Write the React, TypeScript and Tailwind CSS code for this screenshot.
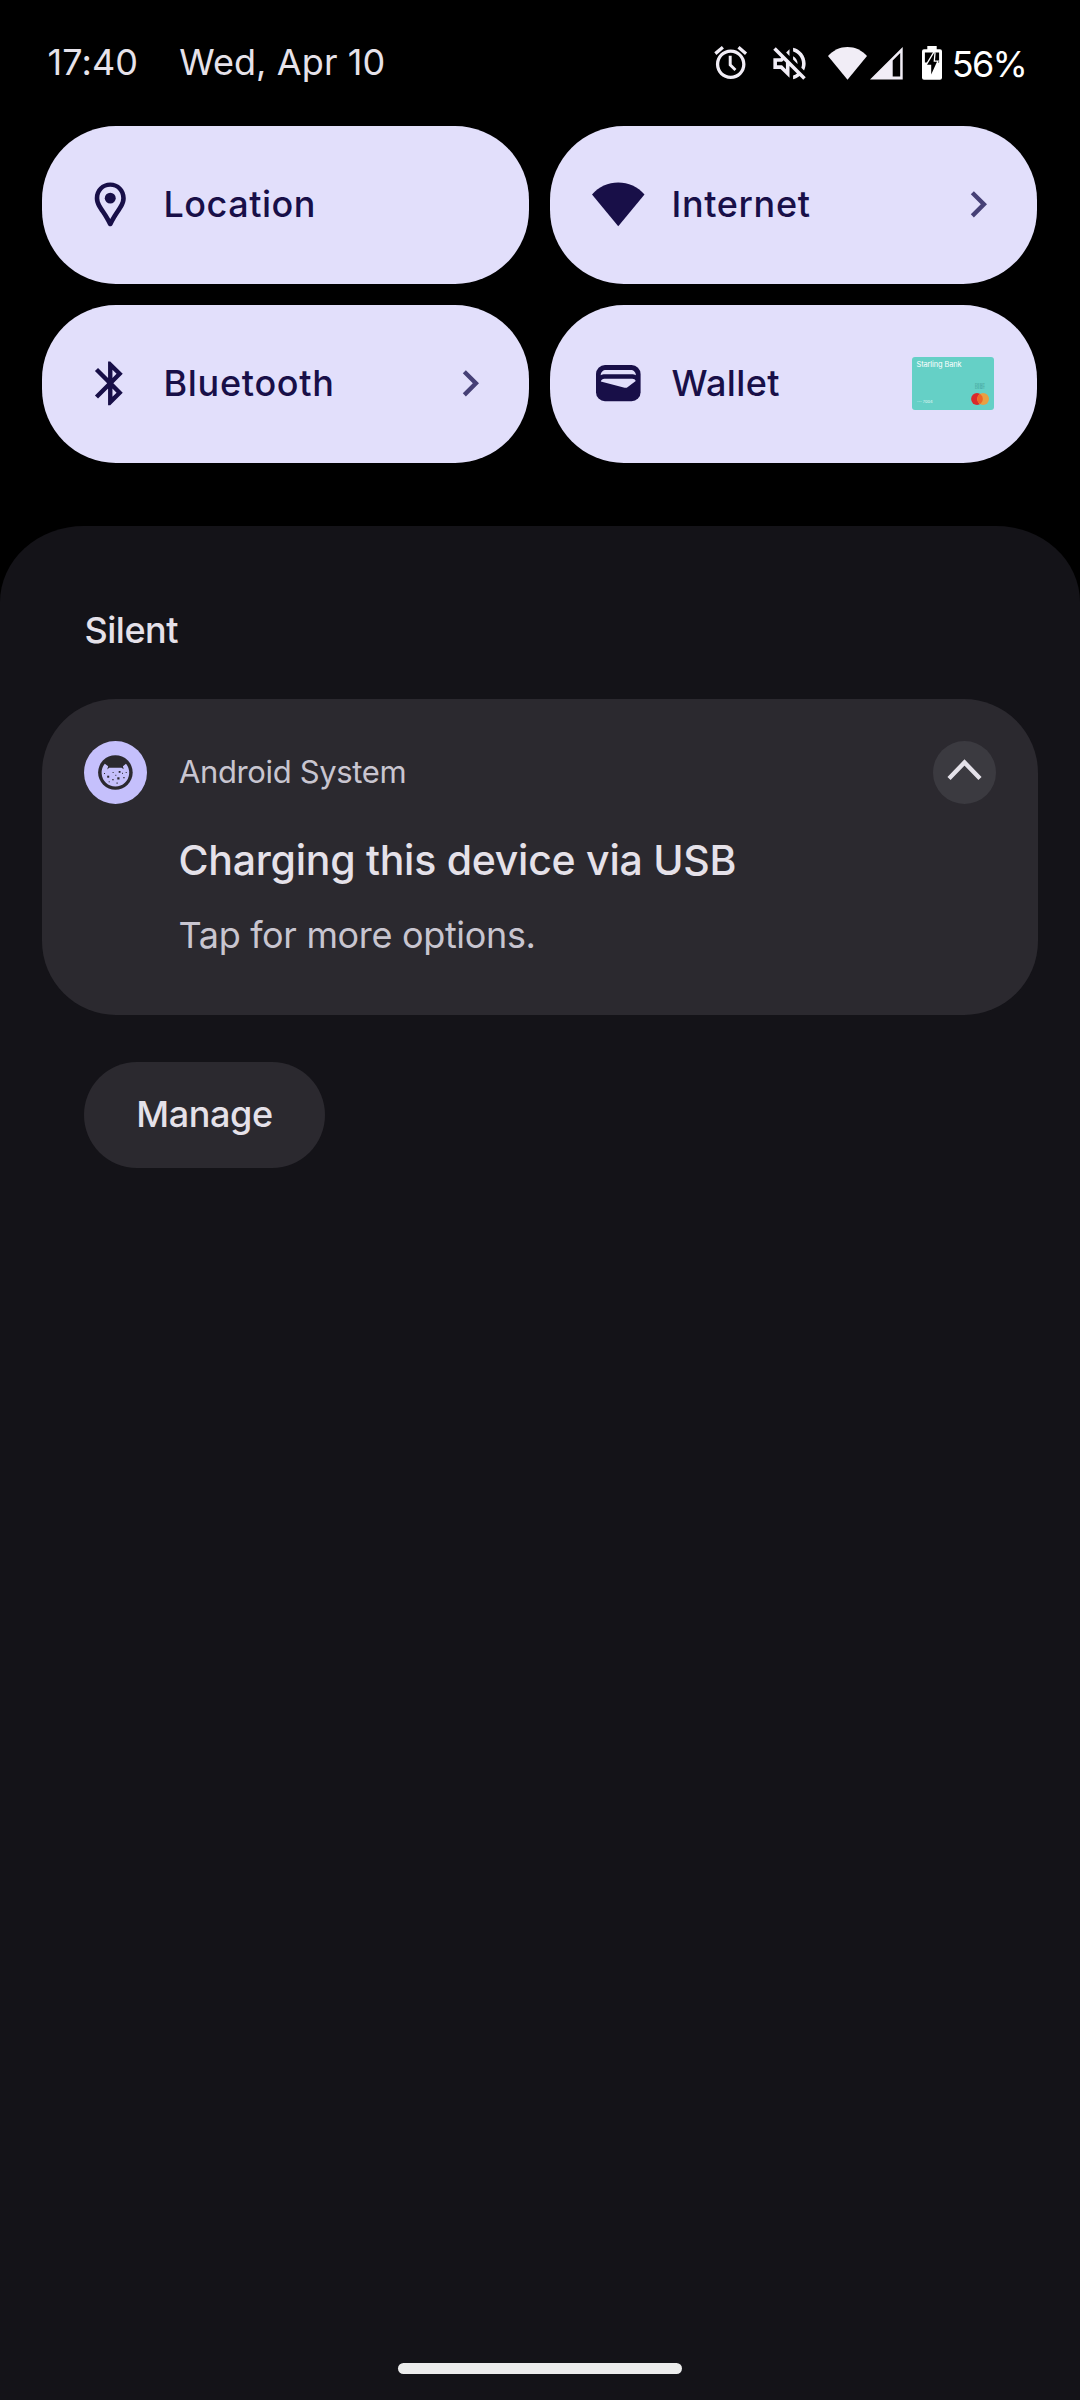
import type { ReactNode } from "react";

function AlarmIcon() {
  return (
    <svg viewBox="0 0 24 24" className="size-[39.4px]" fill="currentColor">
      <path d="M22 5.72l-4.6-3.86-1.29 1.53 4.6 3.86L22 5.72zM7.88 3.39L6.6 1.86 2 5.71l1.29 1.53 4.59-3.85zM12.6 7.8h-1.8v5.9l3.5 3.4 1.2-1.3-2.9-2.8V7.8zM12 4c-4.97 0-9 4.03-9 9s4.02 9 9 9a9 9 0 000-18zm0 16c-3.87 0-7-3.13-7-7s3.13-7 7-7 7 3.13 7 7-3.13 7-7 7z" />
    </svg>
  );
}

function MutedIcon() {
  return (
    <svg viewBox="0 0 24 24" className="size-[43px]" fill="currentColor">
      <path d="M4.34 2.93L2.93 4.34 7.29 8.7 7 9H3v6h4l5 5v-6.59l4.18 4.18c-.65.49-1.38.88-2.18 1.11v2.06c1.34-.3 2.57-.92 3.61-1.75l2.05 2.05 1.41-1.41L4.34 2.93zM10 15.17L7.83 13H5v-2h2.83l.88-.88L10 11.41v3.76zM19 12c0 .82-.15 1.61-.41 2.34l1.53 1.53c.56-1.17.88-2.48.88-3.87 0-4.28-2.99-7.86-7-8.77v2.06c2.89.86 5 3.54 5 6.71zm-7-8l-1.88 1.88L12 7.76V4zm4.5 8c0-1.77-1.02-3.29-2.5-4.03v1.79l2.48 2.48c.01-.08.02-.16.02-.24z" />
    </svg>
  );
}

function StatusWifiIcon() {
  return (
    <svg viewBox="0 0 39 33" className="h-[33px] w-[39px]" fill="currentColor">
      <path d="M0 9C5 3.3 12 0 19.5 0S34 3.3 39 9L19.5 32.7z" />
    </svg>
  );
}

function SignalIcon() {
  return (
    <svg viewBox="0 0 33 33" className="size-[33px]" fill="currentColor" fillRule="evenodd">
      <path d="M0 32.5H32.7V0zM22.7 13.5L30.2 6V29.5H22.7z" />
    </svg>
  );
}

function BatteryIcon() {
  return (
    <svg viewBox="0 0 20 34" className="h-[34px] w-[20px]">
      <rect x="5.3" y="0" width="9.4" height="6" fill="#fff" />
      <rect x="0" y="3.2" width="20" height="30.5" rx="2" fill="#fff" />
      <rect x="2.9" y="6.5" width="14.2" height="10" fill="#000" />
      <path d="M12.4 6.5L5 18.8h4.2v9.7l5.8-12.7h-3.4z" fill="#000" stroke="#fff" strokeWidth="2.6" />
      <path d="M12.4 6.5L5 18.8h4.2v9.7l5.8-12.7h-3.4z" fill="#000" />
    </svg>
  );
}

function LocationIcon() {
  return (
    <svg viewBox="0 0 24 24" className="size-[52.5px]" fill="currentColor" fillRule="evenodd">
      <path d="M12 2C8.1 2 4.9 5 4.9 9.2c0 2.5 1.4 4.5 3 6.9 1.4 2 2.3 3.700 3.100 5.400.350.750 1.650.750 2 0 .800-1.700 1.700-3.400 3.100-5.400 1.600-2.400 3-4.400 3-6.900C19.100 5 15.900 2 12 2zm0 2c2.900 0 5 2.200 5 5.200 0 1.900-1.100 3.400-2.500 5.500-1 1.400-1.800 2.700-2.500 4-.700-1.300-1.500-2.600-2.500-4C8.100 12.600 7 11.100 7 9.200 7 6.200 9.100 4 12 4z" />
      <circle cx="12" cy="9.2" r="2.5" />
    </svg>
  );
}

function WifiIcon() {
  return (
    <svg viewBox="0 0 24 24" className="size-[52.5px]" fill="currentColor">
      <path d="M12 22.100L0 7.500C3.100 3.800 7.400 2 12 2s8.900 1.800 12 5.500z" />
    </svg>
  );
}

function BluetoothIcon() {
  return (
    <svg viewBox="0 0 24 24" className="size-[52.5px]" fill="currentColor" fillRule="evenodd">
      <path d="M17.71 7.71L12 2h-1v7.59L6.41 5 5 6.41 10.59 12 5 17.59 6.41 19 11 14.41V22h1l5.71-5.71-4.3-4.29 4.3-4.29zM13 5.83l1.88 1.88L13 9.59V5.83zm1.88 10.46L13 18.17v-3.76l1.88 1.88z" />
    </svg>
  );
}

function WalletIcon() {
  return (
    <svg viewBox="-4 -8 52.5 52.5" className="size-[52.5px]">
      <rect x="0" y="0" width="44.6" height="36.2" rx="9" fill="#180f48" />
      <path d="M4.7 10.3C4.9 7 7 5 10 5H34.6C37.6 5 39.7 7 39.9 10.3C38.6 9.4 37.3 9.2 36 9.2H8.6C7.3 9.2 6 9.4 4.7 10.3z" fill="#e2dffb" />
      <path d="M4.8 16.6C5.4 14.8 6.6 13.8 8.4 13.8H36.2C38 13.8 39.2 14.6 39.7 16L31.8 22C30.8 22.8 29.8 23 28.6 22.7z" fill="#e2dffb" />
    </svg>
  );
}

function ChevronRight() {
  return (
    <svg viewBox="0 0 24 24" className="size-[52.5px] text-[#464076]" fill="currentColor">
      <path d="M8.59 16.59L13.17 12 8.59 7.41 10 6l6 6-6 6z" />
    </svg>
  );
}

function SystemIcon() {
  return (
    <svg viewBox="0 0 63 63" className="size-[63px]">
      <circle cx="31.5" cy="31.5" r="31.5" fill="#c5c0fc" />
      <circle cx="31.4" cy="31.5" r="17.3" fill="#2b292f" />
      <path
        d="M20.8 22.8A13.8 13.8 0 1 0 42 22.8L38.9 25.2L39.7 28.2L37.6 26.8H25.2L23.2 28.4L24.2 25.2z"
        fill="#c5c0fc"
      />
      <g fill="#2b292f">
        <rect x="23.2" y="34.7" width="2" height="2" />
        <rect x="33.3" y="36.3" width="2.2" height="2.2" />
        <rect x="34.7" y="30" width="1.8" height="1.8" />
        <rect x="28.6" y="31" width="1" height="1" />
        <rect x="20" y="32" width="1" height="1" />
        <rect x="28.3" y="38" width="1.3" height="1.3" />
        <rect x="32.5" y="41.5" width="1.2" height="1.2" />
        <rect x="39.3" y="36" width="1.3" height="1.3" />
        <rect x="24.7" y="40.3" width="1" height="1" />
        <rect x="38" y="31.8" width="1" height="1" />
        <rect x="41.7" y="31" width="1" height="1" />
        <rect x="31.3" y="33.8" width="1" height="1" />
      </g>
    </svg>
  );
}

function WalletCard() {
  return (
    <div className="relative mr-[10.5px] h-[53px] w-[82px] overflow-hidden rounded-[3px] bg-[#65d0c6]">
      <span className="absolute left-[4.5px] top-[3px] whitespace-nowrap text-[7.4px] leading-[10px] tracking-[-0.1px] text-white">
        Starling Bank
      </span>
      <span className="absolute left-[5px] top-[42px] text-[4px] leading-[5px] text-white/80">···· 7004</span>
      <span className="absolute left-[63px] top-[27px] text-[3.5px] leading-[3.5px] text-[#3e9c94]">
        DEBIT
        <br />
        DEBIT
      </span>
      <svg viewBox="0 0 18 12" className="absolute left-[59px] top-[36px] h-[12px] w-[18px]">
        <circle cx="6" cy="6" r="5.9" fill="#d92a2b" />
        <circle cx="12.1" cy="6" r="5.9" fill="#eaa043" />
        <path d="M9.05 1A5.9 5.9 0 0 1 9.05 11A5.9 5.9 0 0 1 9.05 1z" fill="#ee6527" />
      </svg>
    </div>
  );
}

function Tile({
  icon,
  label,
  tracking,
  end,
}: {
  icon: ReactNode;
  label: string;
  tracking: string;
  end?: ReactNode;
}) {
  return (
    <button className="flex h-[158px] w-[487px] items-center rounded-[74px] bg-[#e2dffb] pb-[2px] pl-[42px] pr-[32.5px] text-[#180f48]">
      {icon}
      <span className={`ml-[27px] flex-1 text-left text-[36px] font-medium leading-[48px] ${tracking}`}>
        {label}
      </span>
      {end}
    </button>
  );
}

export default function App() {
  return (
    <div className="flex h-[2400px] w-[1080px] flex-col overflow-hidden bg-black font-['Inter','Roboto',sans-serif]">
      <header className="flex h-[126px] shrink-0 items-center justify-between pl-[47.5px] pr-[54px] text-[36px] leading-[48px] text-[#e6e2ea]">
        <div className="flex gap-[41px] pb-[2px]">
          <span className="tracking-[0.1px]">17:40</span>
          <span className="tracking-[0.1px]">Wed, Apr 10</span>
        </div>
        <div className="flex items-center text-[#f1edf6]">
          <AlarmIcon />
          <span className="ml-[17.5px]">
            <MutedIcon />
          </span>
          <span className="ml-[17px]">
            <StatusWifiIcon />
          </span>
          <span className="ml-[3.5px]">
            <SignalIcon />
          </span>
          <span className="ml-[18.5px]">
            <BatteryIcon />
          </span>
          <span className="ml-[10px] pt-px tracking-[-1.8px] text-white">56%</span>
        </div>
      </header>

      <section className="grid shrink-0 grid-cols-[487px_487px] gap-[21px] pl-[42px]">
        <Tile icon={<LocationIcon />} label="Location" tracking="tracking-[0.5px]" />
        <Tile icon={<WifiIcon />} label="Internet" tracking="tracking-[0.64px]" end={<ChevronRight />} />
        <Tile icon={<BluetoothIcon />} label="Bluetooth" tracking="tracking-[0.7px]" end={<ChevronRight />} />
        <Tile icon={<WalletIcon />} label="Wallet" tracking="tracking-[0.35px]" end={<WalletCard />} />
      </section>

      <main className="mt-[63px] flex flex-1 flex-col items-start rounded-t-[84px_76px] bg-[#141318] px-[42px] text-[#e5e1e9]">
        <h2 className="ml-[42.5px] mt-[80px] text-[36px] font-medium leading-[48px] tracking-[-0.5px]">Silent</h2>

        <article className="mt-[45px] h-[316px] w-[996px] rounded-[74px] bg-[#2b292f] px-[42px] pt-[42px]">
          <div className="flex items-center">
            <SystemIcon />
            <span className="ml-[32px] flex-1 pb-px text-[31px] leading-[42px] tracking-[-0.37px] text-[#c8c5d0]">
              Android System
            </span>
            <button className="flex size-[63px] items-center justify-center rounded-full bg-[#3b3a40]">
              <svg viewBox="0 0 63 63" className="size-[63px]" fill="none" stroke="#e4e1e9" strokeWidth="4.4">
                <path d="M16 37.5L31.5 21.5L47 37.5" />
              </svg>
            </button>
          </div>
          <div className="ml-[94.5px]">
            <h3 className="mt-[28px] text-[41px] font-medium leading-[56px] tracking-[-0.26px]">
              Charging this device via USB
            </h3>
            <p className="mt-[23px] text-[36px] leading-[48px] tracking-[-0.33px] text-[#c8c5d0]">
              Tap for more options.
            </p>
          </div>
        </article>

        <button className="ml-[42px] mt-[47px] flex h-[106px] w-[241px] items-center justify-center rounded-full bg-[#2b292f] pb-[2px] text-[36px] font-medium leading-[48px] tracking-[-0.38px]">
          Manage
        </button>

        <div className="mb-[26px] mt-auto h-[11px] w-[284px] self-center rounded-full bg-[#ececec]" />
      </main>
    </div>
  );
}
